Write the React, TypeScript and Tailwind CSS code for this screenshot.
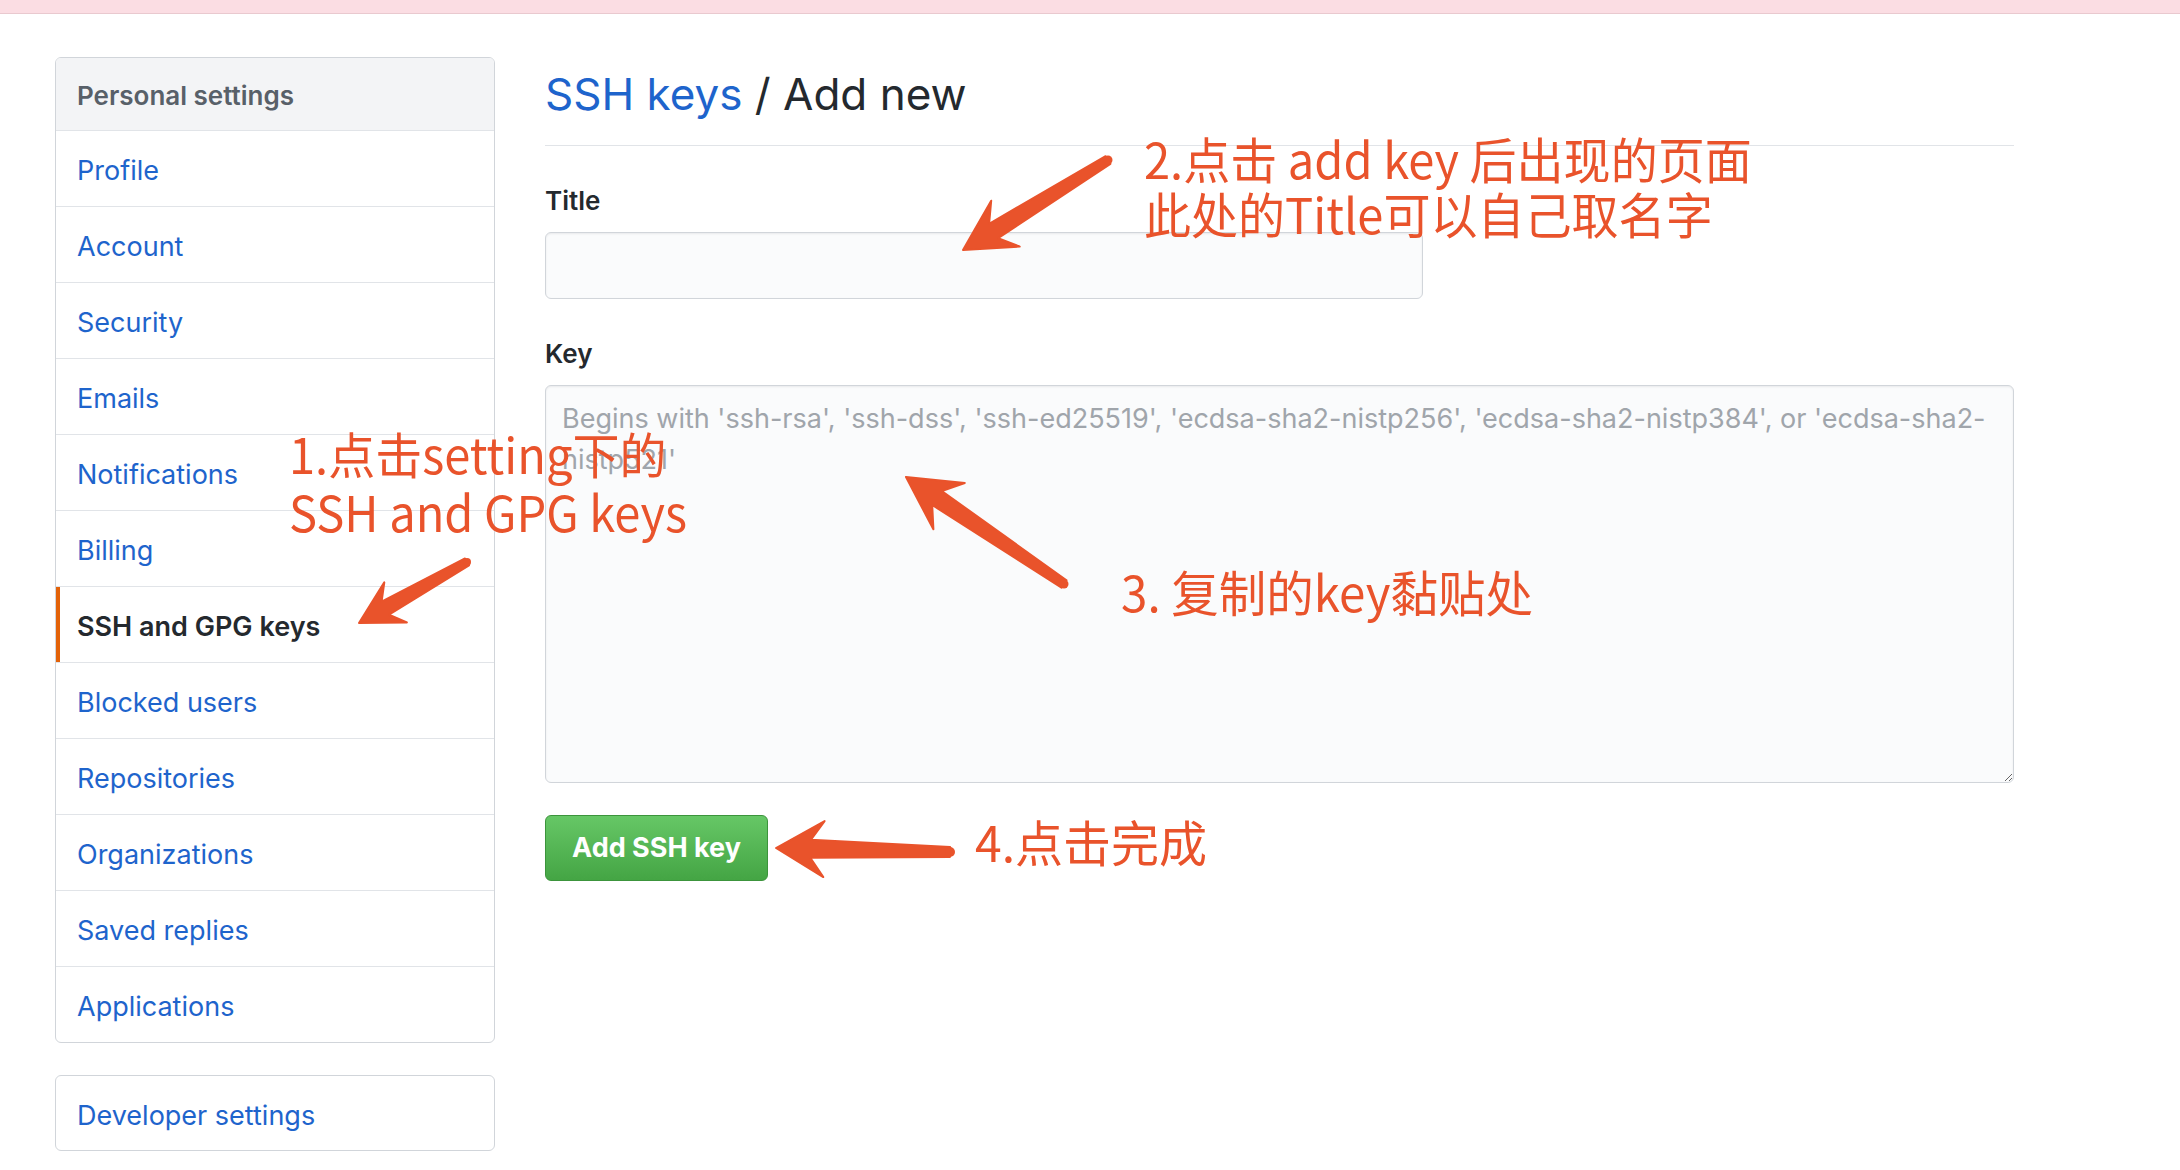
import React from "react";

const menuItems = [
  "Profile",
  "Account",
  "Security",
  "Emails",
  "Notifications",
  "Billing",
  "SSH and GPG keys",
  "Blocked users",
  "Repositories",
  "Organizations",
  "Saved replies",
  "Applications",
];

type Arrow = {
  tail: [number, number];
  tip: [number, number];
  head: number;
  wing: number;
  neck: number;
  end: number;
};

// annotation arrows, drawn over the page
const arrows: Arrow[] = [
  { tail: [467, 562], tip: [359, 623], head: 42, wing: 23, neck: 15, end: 8 },
  { tail: [1108, 160], tip: [963, 250], head: 50, wing: 27, neck: 17, end: 9 },
  { tail: [1064, 584], tip: [906, 477], head: 52, wing: 28, neck: 17, end: 9 },
  { tail: [950, 852], tip: [776, 848], head: 48, wing: 28, neck: 18, end: 10 },
];

function arrowPoints(a: Arrow) {
  const [tx, ty] = a.tail;
  const [px, py] = a.tip;
  const len = Math.hypot(px - tx, py - ty);
  const dx = (px - tx) / len;
  const dy = (py - ty) / len;
  const nx = -dy;
  const ny = dx;
  const at = (back: number, side: number) => [px - dx * back + nx * side, py - dy * back + ny * side];
  const pts = [
    [px, py],
    at(a.head, a.wing),
    at(a.head * 0.72, a.neck / 2),
    [tx + (nx * a.end) / 2, ty + (ny * a.end) / 2],
    [tx - (nx * a.end) / 2, ty - (ny * a.end) / 2],
    at(a.head * 0.72, -a.neck / 2),
    at(a.head, -a.wing),
  ];
  return pts.map((p) => p.map((v) => v.toFixed(1)).join(",")).join(" ");
}

const Annotations: React.FC = () => (
  <div className="pointer-events-none absolute inset-0 font-['Noto_Sans_CJK_SC',sans-serif] text-[49px] text-[#e9532b]">
    <svg className="absolute left-0 top-0" width={2180} height={1170}>
      {arrows.map((a, i) => (
        <g key={i} fill="#e9532b">
          <polygon points={arrowPoints(a)} strokeLinejoin="round" stroke="#e9532b" strokeWidth={2} />
          <circle cx={a.tail[0]} cy={a.tail[1]} r={a.end / 2} />
        </g>
      ))}
    </svg>
    <div className="absolute left-[289px] top-[424px] origin-top-left scale-x-[0.96] whitespace-nowrap leading-[58px]">
      <div>1.点击setting下的</div>
      <div>SSH and GPG keys</div>
    </div>
    <div className="absolute left-[1144px] top-[130px] origin-top-left scale-x-[0.96] whitespace-nowrap leading-[55px]">
      <div>2.点击 add key 后出现的页面</div>
      <div>此处的Title可以自己取名字</div>
    </div>
    <div className="absolute left-[1121px] top-[563px] origin-top-left scale-x-[0.97] whitespace-nowrap leading-[56px]">
      3. 复制的key黏贴处
    </div>
    <div className="absolute left-[975px] top-[813px] origin-top-left scale-x-[0.98] whitespace-nowrap leading-[56px]">
      4.点击完成
    </div>
  </div>
);

const SettingsNav: React.FC = () => (
  <aside className="w-[440px] shrink-0">
    <nav className="overflow-hidden rounded-[6px] border border-[#d1d5da]">
      <div className="flex h-[73px] items-center border-b border-[#e1e4e8] bg-[#f3f4f6] px-[21px] pt-[2px] text-[26px] font-semibold text-[#586069]">
        Personal settings
      </div>
      {menuItems.map((item, i) => {
        const active = item === "SSH and GPG keys";
        const last = i === menuItems.length - 1;
        return (
          <a
            key={item}
            className={
              "flex items-center px-[21px] pt-[6px] text-[27px] " +
              (last ? "h-[75px] " : "h-[76px] border-b border-[#e1e4e8] ") +
              (active
                ? "font-semibold text-[#24292e] shadow-[inset_4px_0_0_#e36209]"
                : "text-[#1e64cc]")
            }
          >
            {item}
          </a>
        );
      })}
    </nav>
    <div className="mt-[32px] rounded-[6px] border border-[#d1d5da]">
      <a className="flex h-[74px] items-center px-[21px] pt-[6px] text-[27px] text-[#1e64cc]">Developer settings</a>
    </div>
  </aside>
);

export default function App() {
  return (
    <div className="relative min-h-[1170px] w-full overflow-hidden bg-white font-['Inter',sans-serif] text-[#24292e]">
      <div className="h-[14px] border-b border-[#e9c9cf] bg-[#fbdde3]" />
      <div className="flex items-start gap-[50px] pl-[55px] pt-[43px]">
        <SettingsNav />
        <main className="w-[1469px] pt-[9px]">
          <h1 className="border-b border-[#e1e4e8] pb-[23px] text-[44px] font-normal leading-[56px]">
            <a className="text-[#1e64cc]">SSH keys</a> / Add new
          </h1>
          <form>
            <label className="mt-[39px] block text-[26px] font-semibold leading-[32px]">Title</label>
            <input
              type="text"
              className="mt-[15px] block h-[67px] w-[878px] rounded-[6px] border border-[#d1d5da] bg-[#fafbfc] px-[16px] text-[27px] shadow-[inset_0_1px_2px_rgba(27,31,35,0.075)] outline-none"
            />
            <label className="mt-[39px] block text-[26px] font-semibold leading-[32px]">Key</label>
            <textarea
              className="mt-[15px] block h-[398px] w-full resize-y rounded-[6px] border border-[#d1d5da] bg-[#fafbfc] px-[16px] pt-[12px] text-[27px] leading-[41px] shadow-[inset_0_1px_2px_rgba(27,31,35,0.075)] outline-none placeholder:text-[#a0a5ab]"
              placeholder="Begins with 'ssh-rsa', 'ssh-dss', 'ssh-ed25519', 'ecdsa-sha2-nistp256', 'ecdsa-sha2-nistp384', or 'ecdsa-sha2-nistp521'"
            />
            <button
              type="button"
              className="mt-[32px] flex h-[66px] w-[223px] items-center justify-center rounded-[6px] border border-[#3c943c] bg-linear-to-b from-[#66c766] to-[#44a544] text-[27px] font-bold text-white"
            >
              Add SSH key
            </button>
          </form>
        </main>
      </div>
      <Annotations />
    </div>
  );
}
